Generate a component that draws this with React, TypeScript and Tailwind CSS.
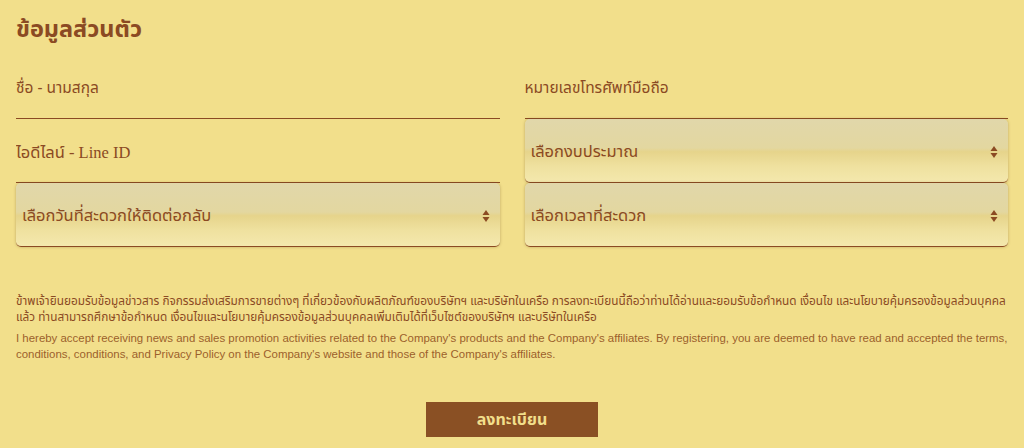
import React from 'react';

const brown = 'text-[#8b4a23]';

const Arrows: React.FC = () => (
  <svg width="8" height="14" viewBox="0 0 8 14" className="shrink-0">
    <path d="M4 1 L7.5 6 L0.5 6 Z" fill="#8b4a23" />
    <path d="M4 13 L7.5 8 L0.5 8 Z" fill="#8b4a23" />
  </svg>
);

const SelectBox: React.FC<{ label: string }> = ({ label }) => (
  <div className="h-16 flex items-center justify-between pl-[6px] pr-[10px] pt-[3px] rounded-[5px] border-b border-[#8b4a23] bg-[linear-gradient(to_bottom,#e1d7aa_0%,#e3d7a0_46%,#e6d48b_52%,#efe19f_75%,#f4e8ad_100%)] shadow-[0_0_3px_rgba(90,60,20,0.35)] cursor-pointer">
    <span className={`text-[16.5px] ${brown}`}>{label}</span>
    <Arrows />
  </div>
);

const TextField: React.FC<{ placeholder: string; serif?: boolean }> = ({ placeholder, serif }) => (
  <div className="h-16 flex items-center pt-[5px] border-b border-[#8b4a23]">
    <input
      type="text"
      placeholder={placeholder}
      className={`w-full bg-transparent outline-none ${brown} placeholder:text-[#8b4a23] ${
        serif ? "text-[16.5px] font-['Liberation_Serif','Noto_Sans_Thai',serif]" : 'text-[15.5px]'
      }`}
    />
  </div>
);

export default function App() {
  return (
    <div className="w-[1024px] h-[448px] overflow-hidden bg-[#f2df8b] px-4 font-['Noto_Sans_Thai','Noto_Sans','Liberation_Sans',sans-serif]">
      <h1 className={`pt-[12px] text-[23.5px] leading-[36px] font-bold ${brown}`}>ข้อมูลส่วนตัว</h1>

      <div className="mt-[7px] grid grid-cols-2 gap-x-[25px]">
        <div className="flex flex-col">
          <TextField placeholder="ชื่อ - นามสกุล" />
          <TextField placeholder="ไอดีไลน์ - Line ID" serif />
          <SelectBox label="เลือกวันที่สะดวกให้ติดต่อกลับ" />
        </div>
        <div className="flex flex-col">
          <TextField placeholder="หมายเลขโทรศัพท์มือถือ" />
          <SelectBox label="เลือกงบประมาณ" />
          <SelectBox label="เลือกเวลาที่สะดวก" />
        </div>
      </div>

      <div className="mt-[46px] leading-[16px]">
        <p className={`whitespace-nowrap text-[11.8px] ${brown}`}>
          ข้าพเจ้ายินยอมรับข้อมูลข่าวสาร กิจกรรมส่งเสริมการขายต่างๆ ที่เกี่ยวข้องกับผลิตภัณฑ์ของบริษัทฯ และบริษัทในเครือ การลงทะเบียนนี้ถือว่าท่านได้อ่านและยอมรับข้อกำหนด เงื่อนไข และนโยบายคุ้มครองข้อมูลส่วนบุคคล
          <br />
          แล้ว ท่านสามารถศึกษาข้อกำหนด เงื่อนไขและนโยบายคุ้มครองข้อมูลส่วนบุคคลเพิ่มเติมได้ที่เว็บไซต์ของบริษัทฯ และบริษัทในเครือ
        </p>
        <p className="mt-[5px] whitespace-nowrap text-[11.45px] text-[#9c5f2c] font-['Liberation_Sans',Arial,sans-serif]">
          I hereby accept receiving news and sales promotion activities related to the Company's products and the Company's affiliates. By registering, you are deemed to have read and accepted the terms,
          <br />
          conditions, conditions, and Privacy Policy on the Company's website and those of the Company's affiliates.
        </p>
      </div>

      <div className="mt-[40px] flex justify-center">
        <button
          type="button"
          className="w-[172px] h-[35px] bg-[#8a5024] text-[#f2df8b] text-[16px] font-bold"
        >
          ลงทะเบียน
        </button>
      </div>
    </div>
  );
}
